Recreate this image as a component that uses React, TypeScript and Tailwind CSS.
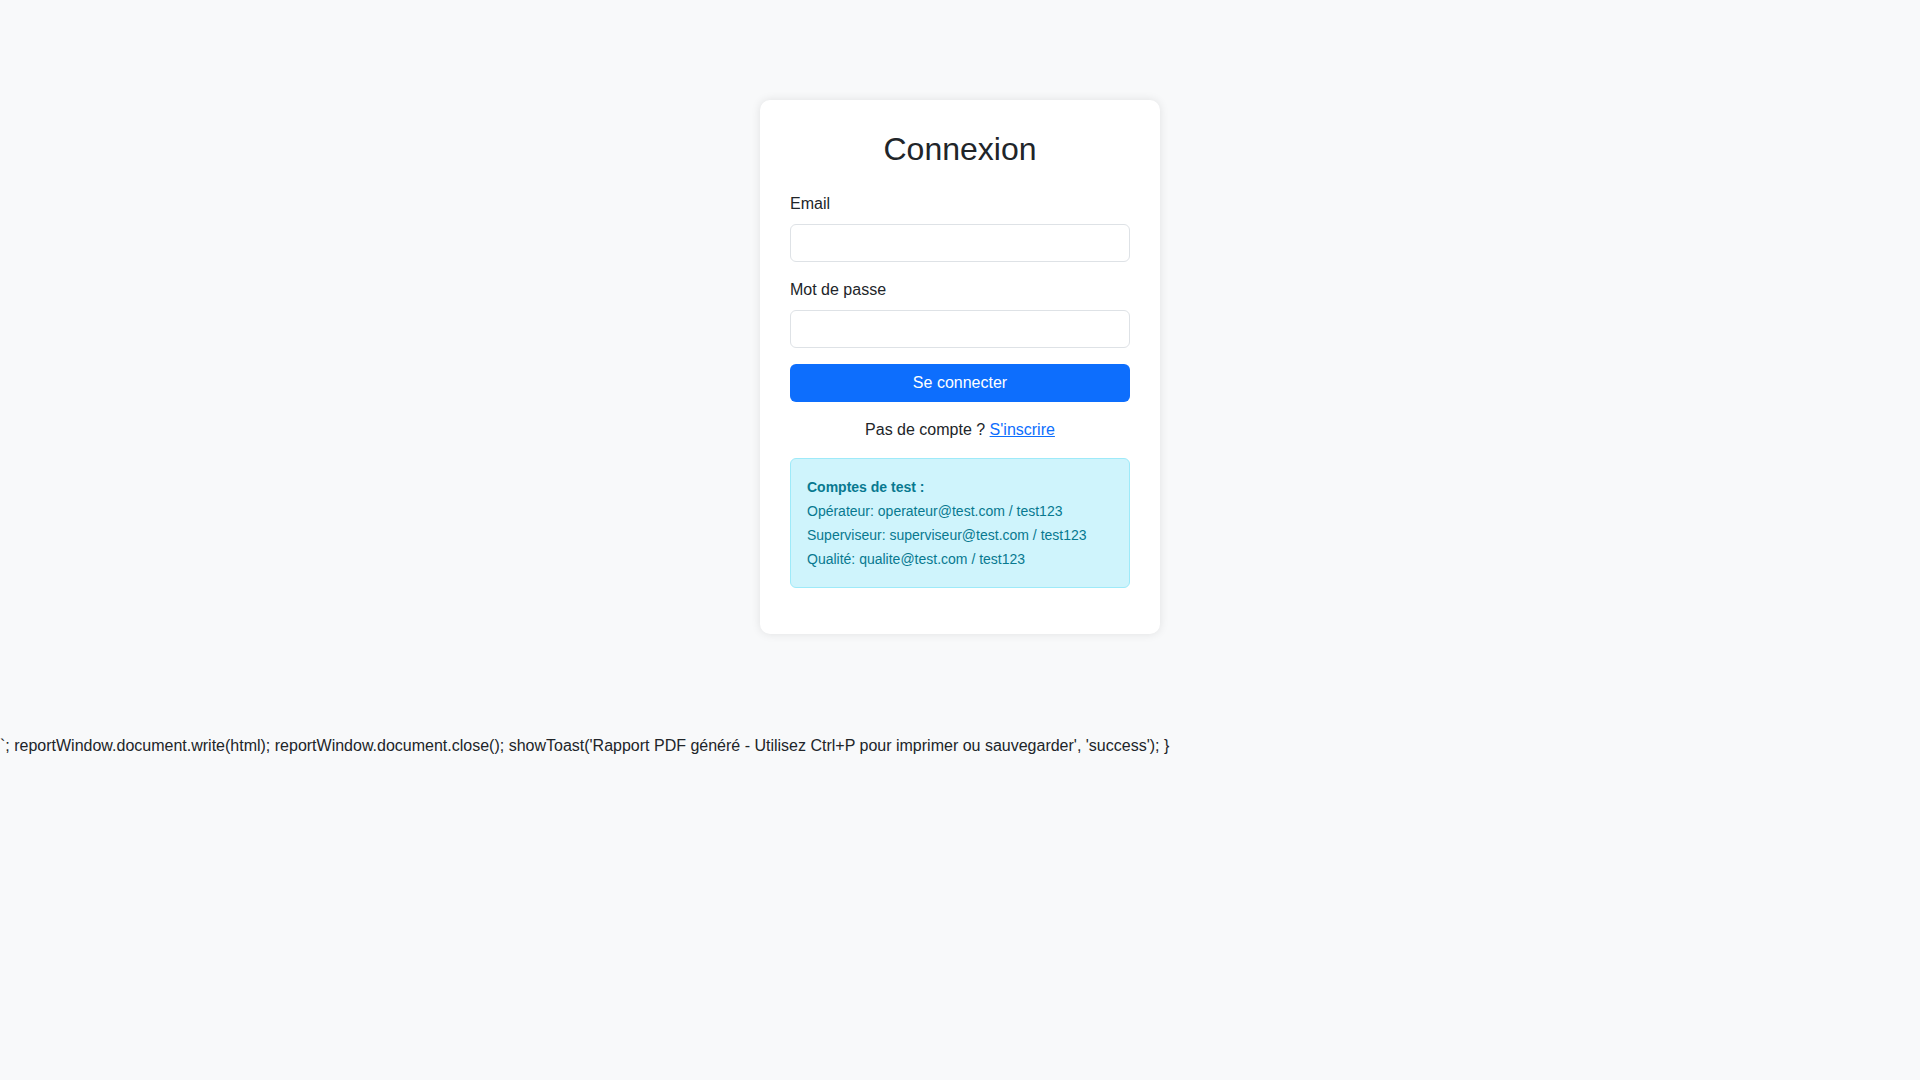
const STRAY_TEXT =
  "`; reportWindow.document.write(html); reportWindow.document.close(); showToast('Rapport PDF généré - Utilisez Ctrl+P pour imprimer ou sauvegarder', 'success'); }";

export default function App() {
  return (
    <div className="min-h-screen bg-[#f8f9fa] pt-[100px] font-['Liberation_Sans',Arial,sans-serif] text-base leading-6 text-[#212529]">
      <div className="mx-auto w-[400px] rounded-[10px] bg-white p-[30px] shadow-[0_0_10px_rgba(0,0,0,0.1)]">
        <h2 className="mb-6 text-center text-[32px] leading-[1.2] font-normal">Connexion</h2>
        <form onSubmit={(e) => e.preventDefault()}>
          <div className="mb-4">
            <label className="mb-2 block">Email</label>
            <input
              type="email"
              className="block h-[38px] w-full rounded-[6px] border border-[#dee2e6] bg-white px-3 outline-none"
            />
          </div>
          <div className="mb-4">
            <label className="mb-2 block">Mot de passe</label>
            <input
              type="password"
              className="block h-[38px] w-full rounded-[6px] border border-[#dee2e6] bg-white px-3 outline-none"
            />
          </div>
          <button
            type="submit"
            className="block h-[38px] w-full rounded-[6px] bg-[#0d6efd] text-white"
          >
            Se connecter
          </button>
        </form>
        <p className="mt-4 mb-4 text-center">
          Pas de compte ? <a href="#" className="text-[#0d6efd] underline">S'inscrire</a>
        </p>
        <div className="mb-4 rounded-[6px] border border-[#9eeaf9] bg-[#cff4fc] p-4 text-[#087990]">
          <small className="text-[14px]">
            <strong>Comptes de test :</strong>
            <br />
            Opérateur: operateur@test.com / test123
            <br />
            Superviseur: superviseur@test.com / test123
            <br />
            Qualité: qualite@test.com / test123
          </small>
        </div>
      </div>
      <div className="mt-[100px] whitespace-nowrap">{STRAY_TEXT}</div>
    </div>
  );
}
